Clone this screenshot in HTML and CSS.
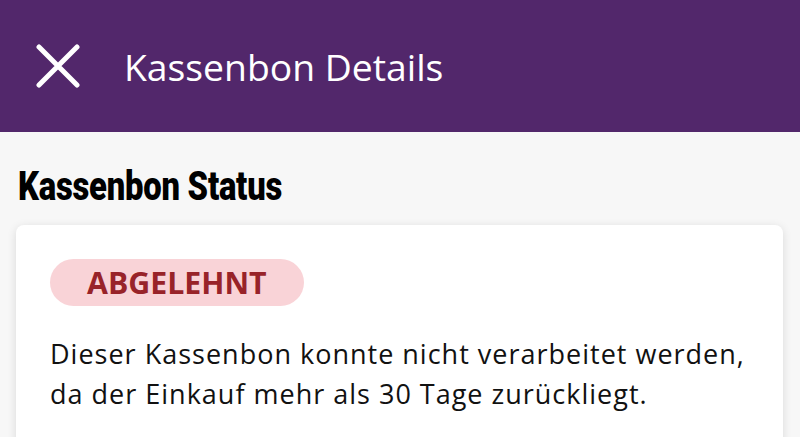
FILE: index.html
```html
<!DOCTYPE html>
<html lang="de">
<head>
    <meta charset="UTF-8">
    <meta name="viewport" content="width=device-width, initial-scale=1.0">
    <title>Kassenbon Details</title>
    <link rel="stylesheet" href="styles.css">
</head>
<body>
    <header class="top-bar">
        <button class="close-btn" aria-label="Schließen">
            <svg viewBox="0 0 44 44" width="44" height="44">
                <path d="M3 3 L41 41 M41 3 L3 41" stroke="#fff" stroke-width="5" stroke-linecap="round" fill="none"/>
            </svg>
        </button>
        <h1 class="top-title">Kassenbon Details</h1>
    </header>
    <main class="content">
        <h2 class="section-title">Kassenbon Status</h2>
        <section class="status-card">
            <span class="badge badge-rejected">ABGELEHNT</span>
            <p class="status-text">Dieser Kassenbon konnte nicht verarbeitet werden, da der Einkauf mehr als 30 Tage zurückliegt.</p>
        </section>
    </main>
</body>
</html>
```

FILE: styles.css
```css
:root { --purple: #52276b; --bg: #f7f7f7; --badge-bg: #f9d3d7; --badge-text: #982329; }
* { box-sizing: border-box; }
body { margin: 0; background-color: var(--bg); font-family: "Open Sans", sans-serif; color: #111; }
.top-bar { background-color: var(--purple); height: 132px; display: flex; align-items: center; padding-left: 36px; gap: 44px; }
.close-btn { background: none; border: 0; padding: 0; width: 44px; height: 44px; display: flex; cursor: pointer; }
.top-title { margin: 0; color: #fff; font-weight: 400; font-size: 37.3px; }
.content { padding: 30px 17px 0 16px; }
/* condensed headline face isn't installed, squeeze a black grotesque instead */
.section-title { margin: 0 0 15px 2px; font-family: Roboto, "Liberation Sans", sans-serif; font-weight: 900; font-size: 41px; letter-spacing: -0.3px; line-height: 48px; color: #000; transform: scaleX(0.8); transform-origin: left center; }
.status-card { background: #fff; border-radius: 8px; box-shadow: 0 2px 10px rgba(0, 0, 0, 0.12); padding: 34px 34px 40px; }
.badge { display: inline-block; border-radius: 24px; padding: 0 37px; height: 47px; line-height: 47px; font-weight: 700; font-size: 30.3px; }
.badge-rejected { background-color: var(--badge-bg); color: var(--badge-text); }
.status-text { margin: 28px 0 0; font-size: 27px; letter-spacing: 1px; line-height: 40px; }
```
